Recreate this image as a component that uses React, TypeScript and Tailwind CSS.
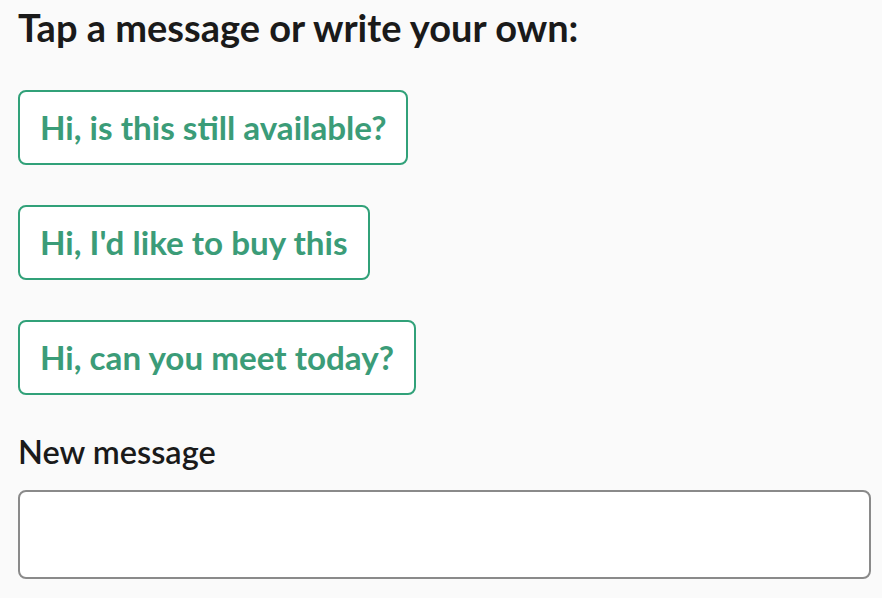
import React from "react";

const options = [
  "Hi, is this still available?",
  "Hi, I'd like to buy this",
  "Hi, can you meet today?",
];

export default function App() {
  return (
    <div
      className="min-h-[598px] w-full bg-[#fafafa] px-[18px] pt-[4px] text-[#1a1a1a]"
      style={{ fontFamily: "Lato, 'Noto Sans', sans-serif" }}
    >
      <h1 className="text-[38px] font-bold leading-[46px]">Tap a message or write your own:</h1>
      <div className="mt-[40px] flex flex-col items-start gap-[40px]">
        {options.map((o) => (
          <button
            key={o}
            className="h-[75px] rounded-[8px] border-2 border-[#31a179] bg-white px-[20px] text-[33.2px] font-bold text-[#3b9c78]"
          >
            {o}
          </button>
        ))}
      </div>
      <div className="mt-[37px] text-[32.5px] font-semibold leading-[40px]">New message</div>
      <input
        className="mt-[18px] block h-[89px] w-[853px] rounded-[8px] border-2 border-[#8a8a8a] bg-white"
        type="text"
      />
    </div>
  );
}
